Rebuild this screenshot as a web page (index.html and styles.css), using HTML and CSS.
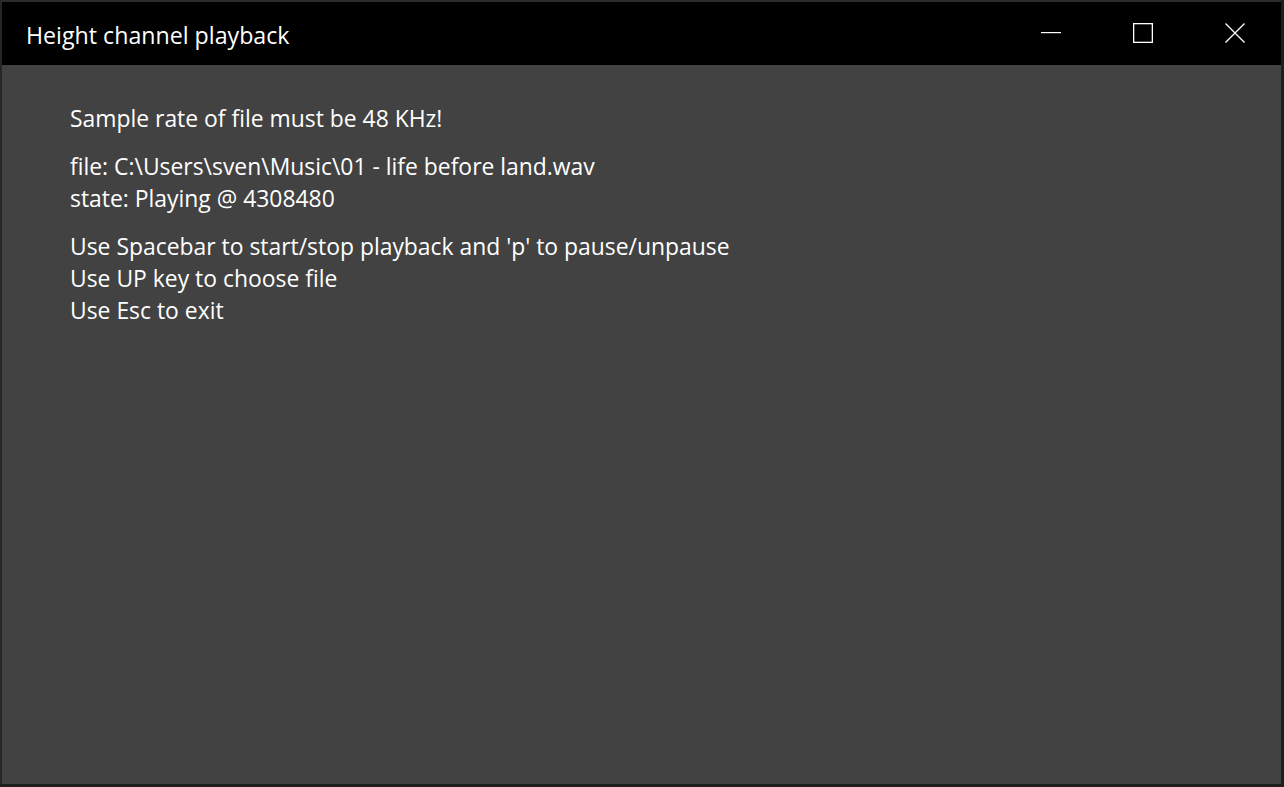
FILE: index.html
```html
<!DOCTYPE html>
<html>
<head>
<meta charset="utf-8">
<link rel="stylesheet" href="styles.css">
</head>
<body>
<div class="window">
  <div class="titlebar">
    <div class="title">Height channel playback</div>
    <div class="controls">
      <div class="ctl">
        <svg width="20" height="20" viewBox="0 0 20 20"><rect x="0" y="9" width="20" height="1.2" fill="#fff"/></svg>
      </div>
      <div class="ctl">
        <svg width="20" height="20" viewBox="0 0 20 20"><rect x="0.5" y="0.5" width="19" height="19" fill="none" stroke="#fff" stroke-width="1.6"/></svg>
      </div>
      <div class="ctl">
        <svg width="20" height="20" viewBox="0 0 20 20"><path d="M0.5 0.5 L19.5 19.5 M19.5 0.5 L0.5 19.5" stroke="#fff" stroke-width="1.3"/></svg>
      </div>
    </div>
  </div>
  <div class="body">
    <div class="block">
      <div class="line">Sample rate of file must be 48 KHz!</div>
    </div>
    <div class="block">
      <div class="line">file: C:\Users\sven\Music\01 - life before land.wav</div>
      <div class="line">state: Playing @ 4308480</div>
    </div>
    <div class="block">
      <div class="line">Use Spacebar to start/stop playback and 'p' to pause/unpause</div>
      <div class="line">Use UP key to choose file</div>
      <div class="line">Use Esc to exit</div>
    </div>
  </div>
</div>
</body>
</html>
```
FILE: styles.css
```css
html, body {
  margin: 0;
  padding: 0;
  height: 100%;
  background: #1f1f1f;
}
body {
  font-family: "Open Sans", "Noto Sans", sans-serif;
  color: #ffffff;
}
.window {
  height: 784px;
  width: 1281px;
  border-top: 2px solid #2b2b2b;
  border-left: 2px solid #262626;
  box-sizing: border-box;
  display: flex;
  flex-direction: column;
  background: #424242;
}
.titlebar {
  height: 63px;
  background: #000;
  display: flex;
  align-items: center;
  justify-content: space-between;
}
.title {
  padding-left: 24px;
  font-size: 23.2px;
  line-height: 30px;
  padding-top: 2px;
}
.controls {
  display: flex;
  height: 100%;
}
.ctl {
  width: 92px;
  display: flex;
  align-items: center;
  justify-content: center;
  height: 100%;
}
.ctl svg { display: block; margin-bottom: 2px; }
.body {
  flex: 1;
  padding: 38px 0 0 68px;
  display: flex;
  flex-direction: column;
  gap: 16px;
}
.line {
  font-size: 22.9px;
  line-height: 32px;
  white-space: pre;
}
```
